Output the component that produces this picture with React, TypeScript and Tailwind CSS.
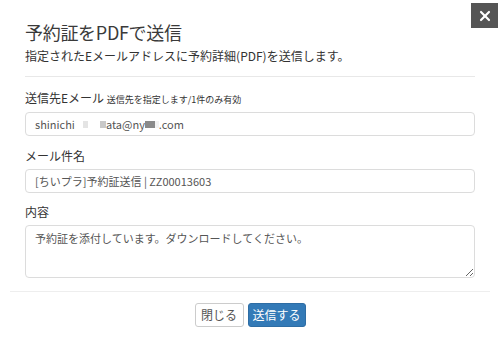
import { X } from "lucide-react";

function Redact({ w, c }: { w: number; c: string }) {
  return <span className="inline-block h-[7px] align-middle" style={{ width: w, background: c }} />;
}

export default function App() {
  return (
    <div className="relative h-[340px] w-[500px] overflow-hidden bg-white font-['Noto_Sans_CJK_JP','Noto_Sans',sans-serif] text-[#333]">
      {/* close */}
      <button className="absolute right-[2px] top-[3px] flex h-[25px] w-[27px] items-center justify-center bg-[#555] text-white">
        <X className="h-[16px] w-[16px]" strokeWidth={3.2} />
      </button>

      <div className="px-[25px] pt-[20px]">
        <h1 className="text-[18px] leading-[24px] tracking-[-0.3px] text-[#3a3a3a]">予約証をPDFで送信</h1>
        <p className="mt-[4px] text-[12px] leading-[16px]">指定されたEメールアドレスに予約詳細(PDF)を送信します。</p>
        <div className="mt-[12px] border-t border-[#e8e8e8]" />

        <div className="mt-[13px] flex flex-col">
          <label className="mb-[4px] text-[12px] leading-[16px]">
            送信先Eメール <span className="text-[9px]">送信先を指定します/1件のみ有効</span>
          </label>
          <div className="flex h-[24px] items-center rounded-[4px] border border-[#dcdcdc] px-[9px] text-[11px] text-[#555]">
            shinichi<span className="w-[8px]" />
            <Redact w={5} c="#e4e4e4" />
            <span className="w-[12px]" />
            <Redact w={6} c="#c8c8c8" />ata@ny<Redact w={10} c="#8a8a8a" />
            <Redact w={4} c="#f2f2f2" />.com
          </div>

          <label className="mb-[5px] mt-[12px] text-[12px] leading-[16px]">メール件名</label>
          <div className="flex h-[24px] items-center rounded-[4px] border border-[#dcdcdc] px-[9px] text-[11px] text-[#555]">
            [ちいプラ]予約証送信 | ZZ00013603
          </div>

          <label className="mb-[5px] mt-[11px] text-[12px] leading-[16px]">内容</label>
          <textarea
            className="h-[53px] resize-y rounded-[4px] border border-[#dcdcdc] px-[9px] py-[4px] text-[11px] leading-[16px] text-[#555] outline-none"
            defaultValue="予約証を添付しています。ダウンロードしてください。"
          />
        </div>
      </div>

      <div className="mx-[10px] mt-[13px] border-t border-[#eee]" />
      <div className="flex justify-center gap-[4px] pt-[11px]">
        <button className="h-[24px] w-[49px] rounded-[3px] border border-[#ccc] bg-white text-[12px] text-[#555]">閉じる</button>
        <button className="h-[24px] w-[58px] rounded-[3px] border border-[#2e6da4] bg-[#337ab7] text-[12px] text-white">送信する</button>
      </div>
    </div>
  );
}
